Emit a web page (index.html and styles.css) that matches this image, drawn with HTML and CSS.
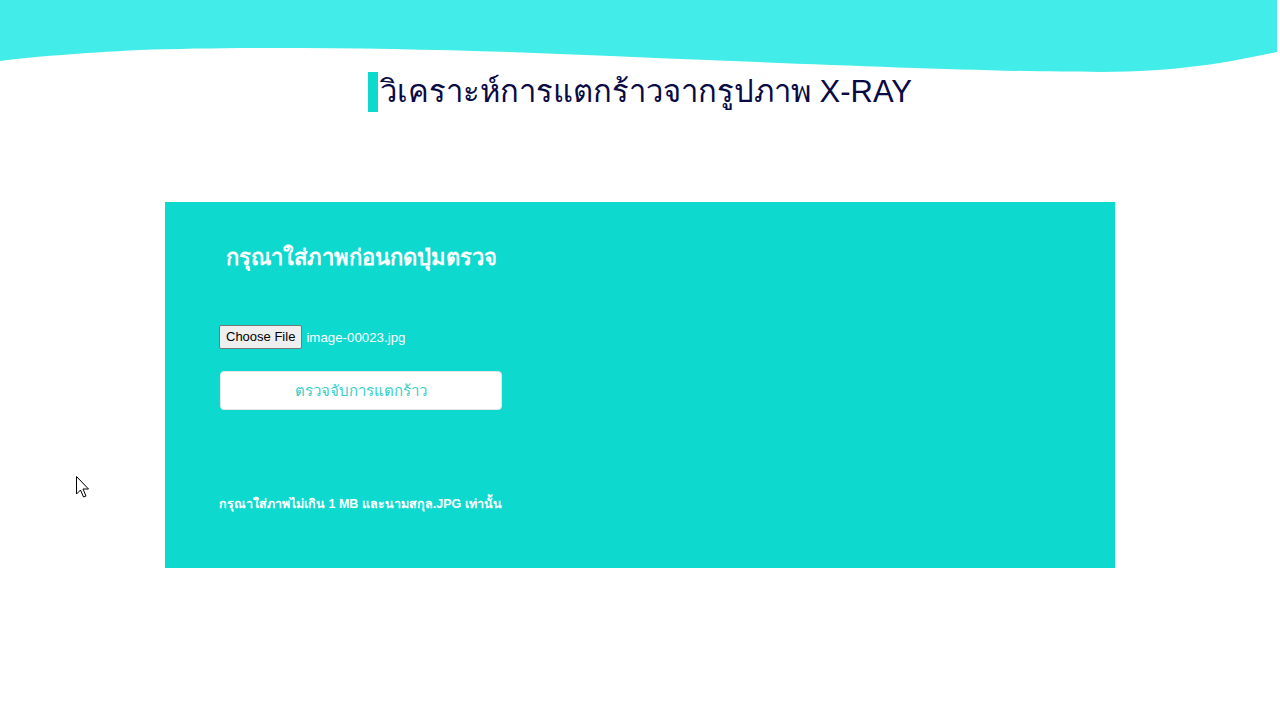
FILE: index.html
```html
<!DOCTYPE html>
<html lang="th">
<head>
<meta charset="utf-8">
<title>X-RAY</title>
<link rel="stylesheet" href="styles.css">
</head>
<body>
<header class="top">
  <svg class="wave" width="1280" height="80" viewBox="0 0 1280 80" preserveAspectRatio="none">
    <path d="M0 0 H1277 V52 C1230 62 1180 72 1100 72 C980 72 760 62 560 54 C420 48 250 46 140 50 C80 53 30 57 0 61 Z" fill="#42ECE8"/>
  </svg>
  <h1 class="title"><span class="accent"></span>วิเคราะห์การแตกร้าวจากรูปภาพ X-RAY</h1>
</header>
<main class="panel">
  <h2 class="panel-heading">กรุณาใส่ภาพก่อนกดปุ่มตรวจ</h2>
  <div class="file-row">
    <span class="file-btn">Choose File</span>
    <span class="file-name">image-00023.jpg</span>
  </div>
  <button class="detect">ตรวจจับการแตกร้าว</button>
  <p class="note">กรุณาใส่ภาพไม่เกิน 1 MB และนามสกุล.JPG เท่านั้น</p>
</main>
<svg class="cursor" width="14" height="26" viewBox="0 0 14 26">
  <path d="M0.5 0.5 V18 L4.5 14 L7.5 21 L10 20 L7 13 L12.5 13 Z" fill="#fff" stroke="#000" stroke-width="1"/>
</svg>
</body>
</html>
```
FILE: styles.css
```css
html, body {
  margin: 0;
  padding: 0;
  background: #fff;
  font-family: "Liberation Sans", Arial, "Noto Sans", sans-serif;
}
body {
  width: 1280px;
  height: 720px;
  position: relative;
  overflow: hidden;
}
.top {
  position: relative;
  height: 202px;
}
.wave {
  position: absolute;
  left: 0;
  top: 0;
  display: block;
}
.title {
  position: relative;
  margin: 0;
  padding-top: 72px;
  display: flex;
  justify-content: center;
  align-items: center;
  font-weight: normal;
  font-size: 31px;
  line-height: 40px;
  color: #0a0a45;
}
.accent {
  display: inline-block;
  width: 10px;
  height: 40px;
  background: #0dd9cf;
  margin-right: 2px;
}
.panel {
  margin-left: 165px;
  width: 950px;
  height: 366px;
  background: #0dd9cf;
  box-sizing: border-box;
  padding: 40px 0 0 54px;
  color: #fff;
}
.panel-heading {
  margin: 0 0 0 7px;
  font-size: 22px;
  font-weight: bold;
  line-height: 32px;
}
.file-row {
  margin-top: 51px;
  display: flex;
  align-items: center;
  height: 24px;
}
.file-btn {
  display: inline-block;
  box-sizing: border-box;
  height: 24px;
  padding: 0 6px;
  line-height: 22px;
  font-size: 13px;
  color: #000;
  background: #efefef;
  border: 1px solid #767676;
  border-radius: 2px;
}
.file-name {
  margin-left: 4px;
  font-size: 13.3px;
}
.detect {
  display: block;
  margin: 22px 0 0 1px;
  width: 282px;
  height: 39px;
  background: #fff;
  border: 1px solid #e6e6e6;
  border-radius: 4px;
  color: #33cec6;
  font-family: inherit;
  font-size: 15px;
}
.note {
  margin: 84px 0 0 0;
  font-size: 12.5px;
  font-weight: bold;
}
.cursor {
  position: absolute;
  left: 76px;
  top: 476px;
}
```
